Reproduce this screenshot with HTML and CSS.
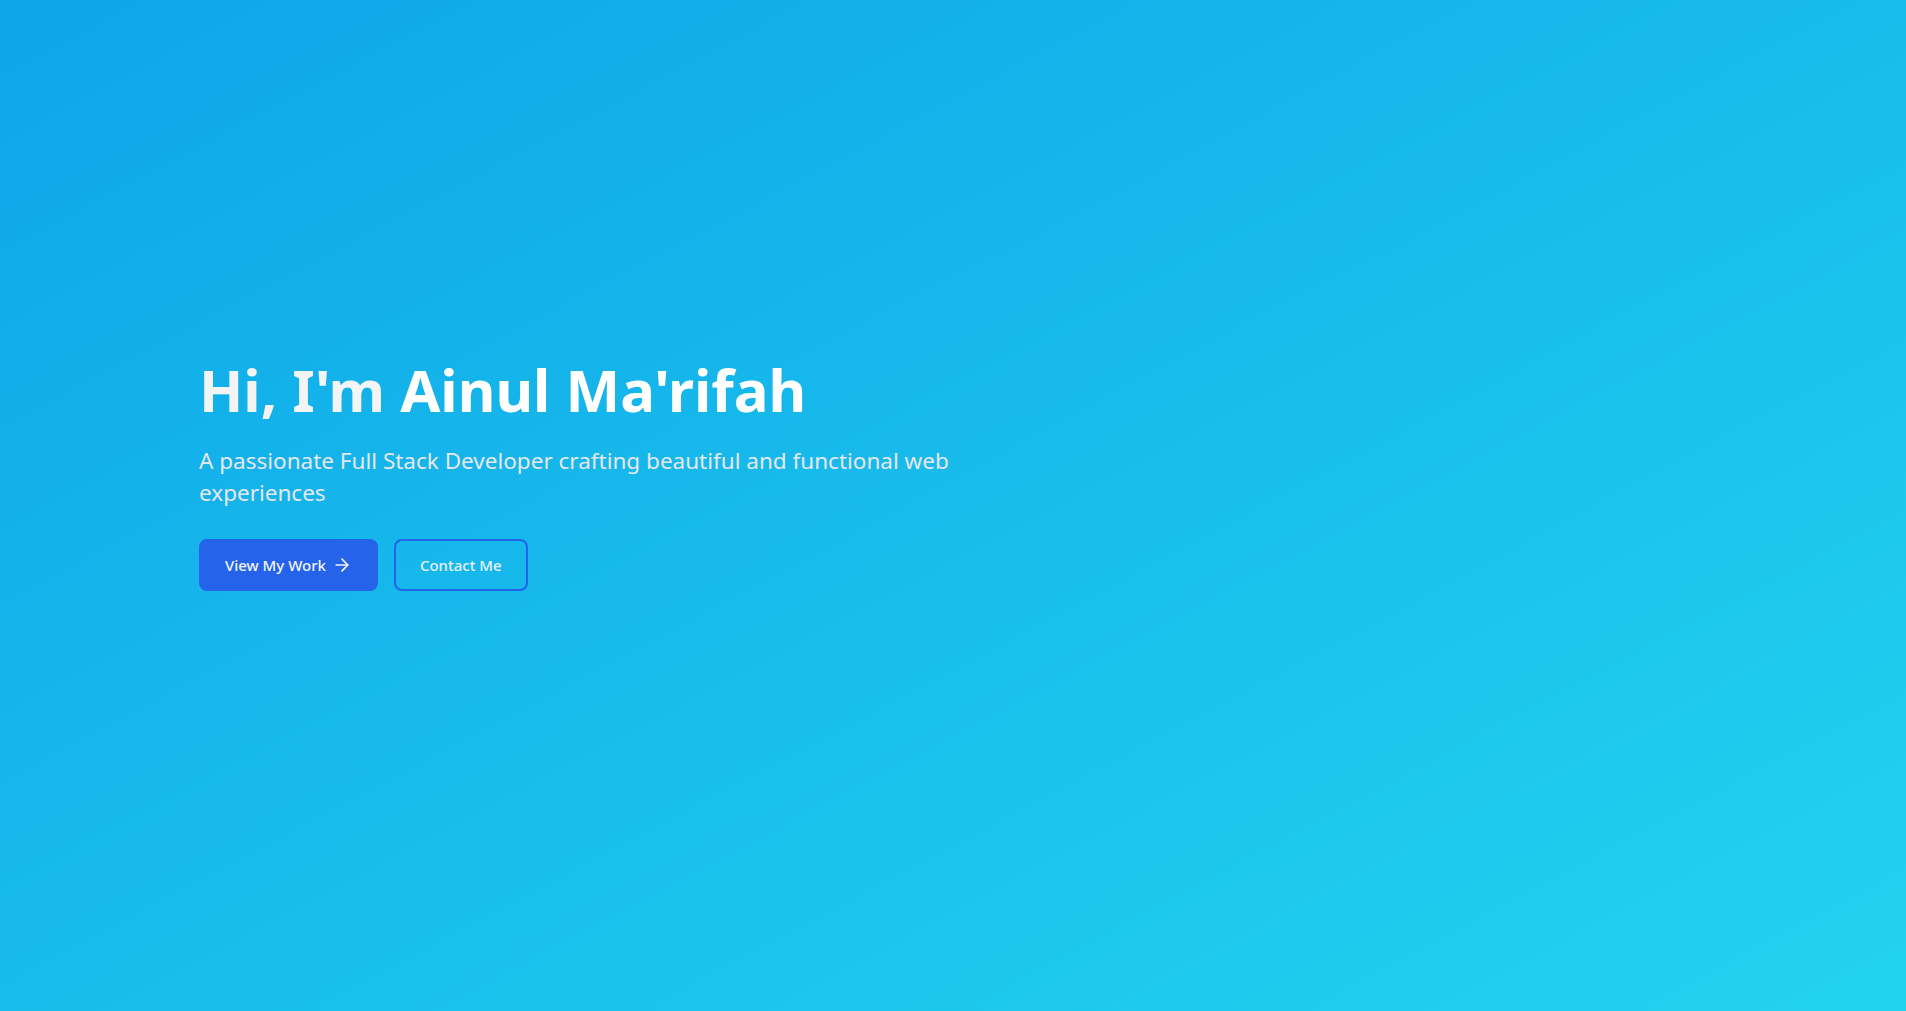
FILE: index.html
```html
<!DOCTYPE html>
<html lang="en">
<head>
<meta charset="utf-8">
<title>Ainul Ma'rifah | Full Stack Developer</title>
<link rel="stylesheet" href="styles.css">
</head>
<body>
  <section class="hero">
    <div class="container">
      <div class="hero-content">
        <h1 class="hero-title"><span class="hi">Hi, I'm </span><span class="name">Ainul Ma'rifah</span></h1>
        <p class="hero-sub">A passionate Full Stack Developer crafting beautiful and functional web experiences</p>
        <div class="hero-actions">
          <a class="btn btn-primary" href="#projects">View My Work
            <svg class="btn-icon" viewBox="0 0 24 24" fill="none" stroke="currentColor" stroke-width="2" stroke-linecap="round" stroke-linejoin="round"><path d="M5 12h14"/><path d="m12 5 7 7-7 7"/></svg>
          </a>
          <a class="btn btn-outline" href="#contact">Contact Me</a>
        </div>
      </div>
    </div>
  </section>
  <section class="more" id="projects"></section>
</body>
</html>
```

FILE: styles.css
```css
html, body {
  margin: 0;
  padding: 0;
}
html::-webkit-scrollbar {
  width: 3px;
}
html::-webkit-scrollbar-track {
  background: #f1f1f1;
}
html::-webkit-scrollbar-thumb {
  background: linear-gradient(to right, #f1f1f1 1px, #c1c1c1 1px);
}
body {
  font-family: "Noto Sans", "Open Sans", sans-serif;
  color: #f3f4f6;
}
.hero {
  min-height: 100vh;
  display: flex;
  align-items: center;
  background: linear-gradient(to bottom right, #0ea5e9, #22d3ee);
}
.container {
  width: 100%;
  max-width: 1536px;
  margin: 0 auto;
  padding: 0 14px 60px;
  box-sizing: border-box;
}
.hero-content {
  max-width: 800px;
}
.hero-title {
  margin: 0 0 26px;
  font-size: 58px;
  line-height: 1;
  font-weight: 700;
}
.hero-title .hi { color: #f3f4f6; }
.hero-title .name { color: #ffffff; }
.hero-sub {
  margin: 0 0 30px;
  font-size: 22.5px;
  line-height: 32px;
  color: #e5e7eb;
}
.hero-actions {
  display: flex;
  gap: 16px;
}
.btn {
  display: inline-flex;
  align-items: center;
  padding: 12px 24px;
  border: 2px solid #2563eb;
  border-radius: 8px;
  font-size: 15px;
  line-height: 24px;
  font-weight: 500;
  text-decoration: none;
  color: #f3f4f6;
}
.btn-primary {
  background: #2563eb;
}
.btn-outline {
  background: transparent;
  color: #e5f0fb;
}
.btn-icon {
  width: 20px;
  height: 20px;
  margin-left: 6px;
}
.more {
  height: 7700px;
  background: #ffffff;
}
```
